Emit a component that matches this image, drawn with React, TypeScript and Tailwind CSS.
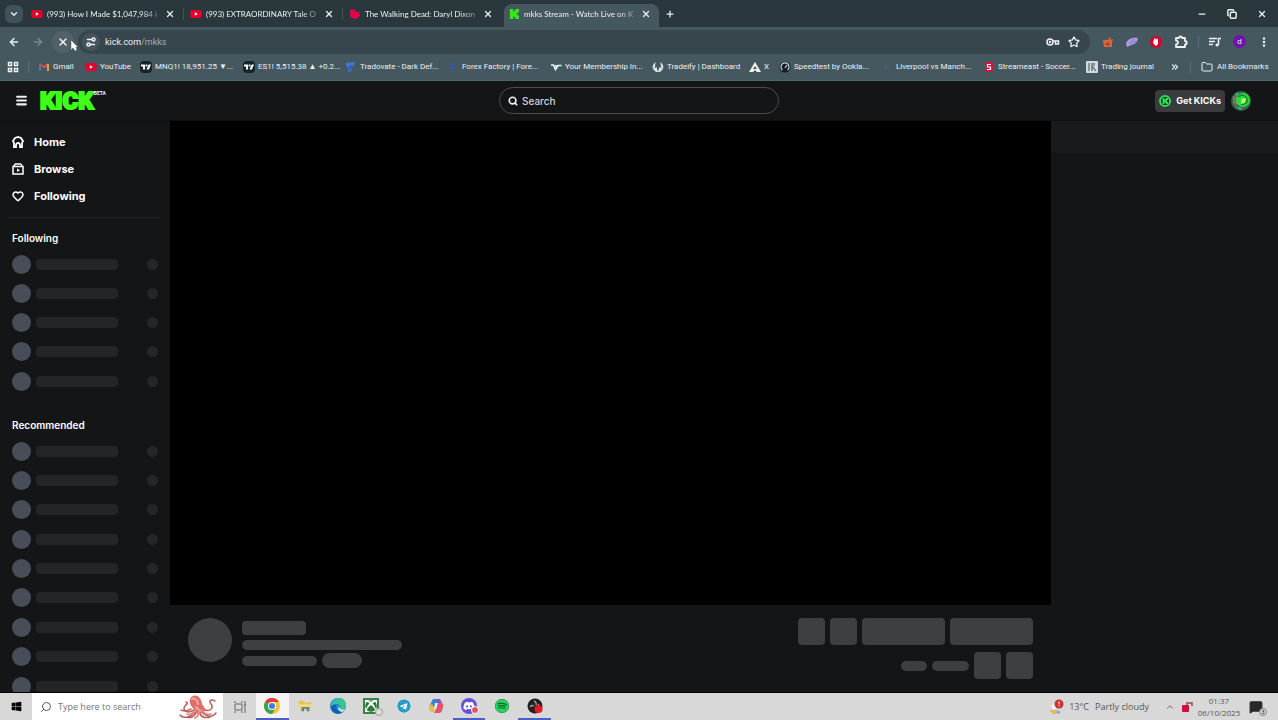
import React from "react";
import {
  ArrowLeft, ArrowRight, ChevronDown, ChevronUp, ChevronsRight, Copy, EllipsisVertical, Folder,
  Menu, Minus, Plus, Search, Settings2, Star, X, MessageSquareText, Heart,
} from "lucide-react";
import { FaDiscord, FaSpotify, FaTelegram, FaWindows, FaXbox, FaYoutube } from "react-icons/fa";
import { SiTradingview } from "react-icons/si";

const KickMark = ({ className = "" }: { className?: string }) => (
  <svg viewBox="0 0 12 12" className={className} fill="currentColor" aria-hidden="true">
    <path d="M1 0h4v3h1.500V1.500H8V0h4v4h-1.500v1.300H9v1.400h1.500V8H12v4H8v-1.500H6.500V9H5v3H1z" />
  </svg>
);

const YouTubeIcon = () => <FaYoutube className="size-3 shrink-0 rounded-sm bg-[radial-gradient(circle,white_30%,transparent_35%)] text-[#e6002d]" />;

const GmailIcon = () => (
  <svg viewBox="0 0 12 12" className="size-3 shrink-0" fill="none" strokeWidth="2">
    <path d="M2 10V3" stroke="#4876b8" />
    <path d="M2 3l4 3.500" stroke="#d34a45" />
    <path d="M6 6.500L10 3" stroke="#e0524b" />
    <path d="M10 3v7" stroke="#d6a34e" />
  </svg>
);

const AppsIcon = () => (
  <svg viewBox="0 0 12 12" className="size-3" fill="none" stroke="currentColor" strokeWidth="1.500">
    <path d="M1.500 1.500h3v3h-3zM7.500 1.500h3v3h-3zM1.500 7.500h3v3h-3zM7.500 7.500h3v3h-3z" />
  </svg>
);

const KeyIcon = () => (
  <svg viewBox="0 0 14 12" className="h-3 w-3.5" fill="none" stroke="currentColor" strokeWidth="1.500">
    <circle cx="4" cy="6" r="3" />
    <circle cx="4" cy="6" r=".5" />
    <path d="M7 5h5.500v3h-3V5.500" />
  </svg>
);

const PuzzleIcon = () => (
  <svg viewBox="0 0 14 14" className="size-3.5" fill="none" stroke="currentColor" strokeWidth="1.800">
    <path d="M2 3h3a1.500 1.500 0 0 1 3 0h3v3a1.700 1.700 0 0 1 0 3.400V12H2V9.500a2 2 0 0 0 0-4z" strokeLinejoin="round" />
  </svg>
);

const MediaIcon = () => (
  <svg viewBox="0 0 12 12" className="size-3" fill="none" stroke="currentColor" strokeWidth="1.500">
    <path d="M0 2.500h8M0 5.500h6M0 8.500h4M12 2.500H9.500V9" />
    <circle cx="8" cy="9" r="1.500" fill="currentColor" stroke="none" />
  </svg>
);

const TradingIcon = () => (
  <span className="flex size-3 shrink-0 items-center justify-center rounded-sm bg-[#17232b] text-white">
    <SiTradingview className="size-2.5" />
  </span>
);

const TradovateIcon = () => (
  <svg viewBox="0 0 12 12" className="size-3 shrink-0">
    <path d="M1 2l9-1-1 4-2 1-1 5-3-1V6L1 5z" fill="#4179cc" />
    <path d="M4 5l5-1-2 2-3 4z" fill="#2e5ca8" />
  </svg>
);

const ForexIcon = () => (
  <svg viewBox="0 0 12 12" className="size-3 shrink-0">
    <path d="M3 2h6v2H5v2h3v2H5v3H3z" fill="#3e5699" />
  </svg>
);

const WingIcon = () => (
  <svg viewBox="0 0 12 12" className="size-3 shrink-0" fill="none" stroke="#eef2f4" strokeWidth="1.600">
    <path d="M1 4h2.500l2 4.500L8 4.500h3.500M5 4.500l2 1" />
  </svg>
);

const LaurelIcon = () => (
  <svg viewBox="0 0 12 12" className="size-3 shrink-0" fill="#e1e7e9">
    <path d="M3.500 1C1 3 0 6 1 8l2-2zM8.500 1C11 3 12 6 11 8L9 6zM1 8l3 3h2L4.500 6zM11 8l-3 3H6l1.500-5z" />
  </svg>
);

const TriangleIcon = () => (
  <svg viewBox="0 0 12 12" className="size-3 shrink-0">
    <path d="M6 1l6 10H0z" fill="#eef2f4" />
    <path d="M6 5l2 3H4zM6 9l2 2H4z" fill="#46585f" />
  </svg>
);

const GaugeIcon = () => (
  <svg viewBox="0 0 12 12" className="size-3 shrink-0">
    <circle cx="6" cy="6" r="5.500" fill="#141c28" />
    <path d="M3.500 9A4 4 0 1 1 8.500 9M6 7l2-3" fill="none" stroke="#cfd8dd" strokeWidth="1.200" />
  </svg>
);

const BallIcon = () => (
  <svg viewBox="0 0 12 12" className="size-3 shrink-0">
    <path d="M3 4h5v4H3z" fill="#485d69" />
  </svg>
);

const StreamIcon = () => (
  <svg viewBox="0 0 12 12" className="size-3 shrink-0">
    <rect x="2" y="1" width="8" height="10" rx="2" fill="#d5123b" />
    <path d="M8 3.500H4.500V6H7.500v2.500H4" fill="none" stroke="white" strokeWidth="1.200" />
  </svg>
);

const JournalIcon = () => (
  <svg viewBox="0 0 12 12" className="size-3 shrink-0">
    <rect width="12" height="12" rx="1" fill="#d2dadd" />
    <path d="M3 2v8M6 2v8M6 5l4 5M8 2v3" fill="none" stroke="#52626a" strokeWidth="1.200" />
  </svg>
);

const WalkingIcon = () => (
  <svg viewBox="0 0 12 12" className="size-3 shrink-0">
    <path d="M1 2l4-1 1 2 4 1 1 4-4 3-5-1-1-4z" fill="#de0747" />
  </svg>
);

const tabs = [
  { title: "(993) How I Made $1,047,984 in", icon: <YouTubeIcon /> },
  { title: "(993) EXTRAORDINARY Tale Of", icon: <YouTubeIcon /> },
  { title: "The Walking Dead: Daryl Dixon", icon: <WalkingIcon /> },
  { title: "mkks Stream - Watch Live on K", icon: <KickMark className="mx-px size-2.5 shrink-0 text-[#35e816]" />, active: true },
];

const bookmarks = [
  { label: "Gmail", icon: <GmailIcon />, width: "w-[47px]" },
  { label: "YouTube", icon: <YouTubeIcon />, width: "w-[55px]" },
  { label: "MNQ1! 18,951.25 ▼...", icon: <TradingIcon />, width: "w-[103px]" },
  { label: "ES1! 5,515.38 ▲ +0.2...", icon: <TradingIcon />, width: "w-[102px]" },
  { label: "Tradovate - Dark Def...", icon: <TradovateIcon />, width: "w-[102px]" },
  { label: "Forex Factory | Fore...", icon: <ForexIcon />, width: "w-[103px]" },
  { label: "Your Membership In...", icon: <WingIcon />, width: "w-[102px]" },
  { label: "Tradeify | Dashboard", icon: <LaurelIcon />, width: "w-[97px]" },
  { label: "X", icon: <TriangleIcon />, width: "w-[30px]" },
  { label: "Speedtest by Ookla...", icon: <GaugeIcon />, width: "w-[102px]" },
  { label: "Liverpool vs Manch...", icon: <BallIcon />, width: "w-[102px]" },
  { label: "Streameast - Soccer...", icon: <StreamIcon />, width: "w-[103px]" },
  { label: "Trading journal", icon: <JournalIcon />, width: "w-[72px]" },
];

function TabStrip() {
  return (
    <div className="flex h-[27px] shrink-0 items-stretch bg-[#2a373d]">
      <div className="flex w-[27px] shrink-0 items-center justify-center">
        <button aria-label="Search tabs" className="flex size-[18px] items-center justify-center rounded-md bg-[#42525a]">
          <ChevronDown className="size-2.5" strokeWidth={3} />
        </button>
      </div>
      <div role="tablist" className="flex min-w-0">
        {tabs.map((tab, i) => (
          <div
            key={tab.title}
            className={
              tab.active
                ? "mt-1 flex w-[155px] items-center gap-1 rounded-t-lg bg-[#46585f] pr-2 pb-1 pl-1"
                : "flex w-[159px] items-center gap-1 pr-0.5 pl-1"
            }
          >
            {tab.icon}
            <button role="tab" aria-selected={!!tab.active} className="min-w-0 flex-1 text-left font-['Lato',sans-serif] whitespace-nowrap [mask-image:linear-gradient(to_right,black_85%,transparent_110%)]">
              {tab.title}
            </button>
            <button aria-label="Close tab" className="ml-1 shrink-0">
              <X className="size-2.5" strokeWidth={3} />
            </button>
            {!tab.active && <span className={i < 2 ? "ml-1 h-3 w-px bg-[#43515a]" : "ml-1 h-3 w-px"} />}
          </div>
        ))}
      </div>
      <button aria-label="New tab" className="px-1.5"><Plus className="size-2.5" strokeWidth={3} /></button>
      <div className="ml-auto flex items-center gap-5 pr-[11px]">
        <button aria-label="Minimize"><Minus className="size-2.5" strokeWidth={3} /></button>
        <button aria-label="Restore"><Copy className="size-2.5 -scale-x-100 -rotate-90" strokeWidth={3.500} /></button>
        <button aria-label="Close"><X className="size-2.5" strokeWidth={3} /></button>
      </div>
    </div>
  );
}

function Toolbar() {
  return (
    <div className="relative flex h-[29px] shrink-0 items-center bg-[#46585f] pr-2">
      <button aria-label="Back" className="flex w-7 justify-center"><ArrowLeft className="size-3" strokeWidth={3} /></button>
      <button aria-label="Forward" className="flex w-5 justify-center text-[#77878e]"><ArrowRight className="size-3" strokeWidth={3} /></button>
      <button aria-label="Stop loading" className="ml-1 flex size-[22px] items-center justify-center rounded-full bg-[#526168]"><X className="size-3" strokeWidth={3} /></button>
      <div className="ml-1 flex h-6 min-w-0 flex-1 items-center rounded-full bg-[#37464d] pr-2.5 pl-1">
        <button aria-label="Site information" className="flex size-[18px] items-center justify-center rounded-full bg-[#45545b]"><Settings2 className="size-3 -scale-y-100" strokeWidth={3} /></button>
        <div className="relative ml-[5px] min-w-0 flex-1 text-[9px]">
          <span aria-hidden="true">kick.com<span className="text-[#a0adb3]">/mkks</span></span>
          <input aria-label="Address" defaultValue="kick.com/mkks" className="absolute inset-0 w-full text-transparent outline-none" />
        </div>
        <button aria-label="Passwords"><KeyIcon /></button>
        <button aria-label="Bookmark page" className="ml-2"><Star className="size-3" strokeWidth={2.500} /></button>
      </div>
      <div className="flex items-center gap-3 pl-3">
        <button aria-label="Fox extension">
          <svg viewBox="0 0 12 12" className="size-3"><path d="M1 4h5l2-3 1 3 2-1-1 4v4H2z" fill="#db6334" /><path d="M3 8l4-2v4z" fill="#8c4430" /></svg>
        </button>
        <button aria-label="Planet extension">
          <svg viewBox="0 0 12 12" className="size-3"><path d="M0 8C1 3 6 1 12 2c-1 5-4 7-7 7l-4 2z" fill="#b19ae5" /><path d="M3 8l5-5M6 8l4-3" stroke="#7b69c1" /></svg>
        </button>
        <button aria-label="Blocker extension">
          <svg viewBox="0 0 12 12" className="size-3"><circle cx="6" cy="6" r="6" fill="#d80027" /><path d="M4 3l1-1 1 2 1-2 1 2v4L6 10 3 7z" fill="white" /></svg>
        </button>
        <button aria-label="Extensions"><PuzzleIcon /></button>
      </div>
      <span className="mx-2.5 h-3 w-px bg-[#5c6d74]" />
      <div className="flex items-center gap-3">
        <button aria-label="Media controls"><MediaIcon /></button>
        <button className="flex size-[13px] items-center justify-center rounded-full bg-[#7113ab]">d</button>
        <button aria-label="Browser menu"><EllipsisVertical className="size-3" strokeWidth={3} /></button>
      </div>
      <svg viewBox="0 0 10 14" className="absolute top-3 left-[70px] h-3.5 w-2.5" aria-hidden="true">
        <path d="M1 1v10l2-2 2 3 2-1-1-3h2z" fill="white" stroke="#46585f" strokeWidth=".5" />
      </svg>
    </div>
  );
}

function BookmarkBar() {
  return (
    <nav aria-label="Bookmarks" className="flex h-[25px] shrink-0 items-center overflow-hidden border-b border-[#53636a] bg-[#46585f] pb-0.5 pl-[7px] whitespace-nowrap">
      <button aria-label="Apps"><AppsIcon /></button>
      <span className="mx-[9px] h-3 w-px bg-[#5c6d74]" />
      {bookmarks.map((b) => (
        <a key={b.label} href="#" className={`${b.width} flex shrink-0 items-center gap-[3px]`}>
          {b.icon}
          <span>{b.label}</span>
        </a>
      ))}
      <button aria-label="More bookmarks" className="ml-3"><ChevronsRight className="size-2.5" strokeWidth={3} /></button>
      <span className="mx-2.5 h-3 w-px bg-[#5c6d74]" />
      <a href="#" className="flex items-center gap-1"><Folder className="size-3" />All Bookmarks</a>
    </nav>
  );
}

function SiteHeader() {
  return (
    <header className="grid h-10 shrink-0 grid-cols-[1fr_280px_1fr] items-center border-b border-[#0e0f10] bg-[#141517] font-['Inter',sans-serif]">
      <div className="flex items-center pl-[15px]">
        <button aria-label="Toggle menu"><Menu className="size-[13px]" strokeWidth={4} /></button>
        <a href="#" className="ml-3 flex items-start font-['Roboto',sans-serif]">
          <span className="text-2xl leading-6 font-black text-[#3fff19] [-webkit-text-stroke:2px_#3fff19]">KICK</span>
          <span className="text-[5px] leading-[8px] font-bold">BETA</span>
        </a>
      </div>
      <label className="flex h-[27px] items-center gap-1 rounded-full border border-[#4b4d4f] px-2">
        <Search className="size-2.5" strokeWidth={4} />
        <input aria-label="Search" placeholder="Search" className="min-w-0 flex-1 text-[10px] font-medium outline-none placeholder:text-[#d4d4d4]" />
      </label>
      <div className="flex items-center justify-end gap-1.5 pr-[27px]">
        <button className="flex h-[22px] items-center gap-1 rounded-sm bg-[#3a3b3d] px-1 text-[9px] font-bold text-white">
          <span className="mr-px flex size-3 items-center justify-center rounded-full border-2 border-[#28df5b] bg-[#102a18] text-[#28df5b]"><KickMark className="size-1.5" /></span>
          Get KICKs
        </button>
        <button aria-label="Profile">
          <svg viewBox="0 0 20 20" className="size-5">
            <circle cx="10" cy="10" r="10" fill="#39664b" />
            <path d="M2 5l5 1-1 9-4-3z" fill="#82705d" />
            <circle cx="12" cy="9" r="7" fill="#26df35" />
            <path d="M7 6c3-3 8-2 9 2s-3 6-6 5" fill="none" stroke="#17813f" strokeWidth="1.500" />
            <path d="M10 8l5-1-1 5-4 1z" fill="#a9fb70" />
            <path d="M4 3l4-2-2 5zM4 15l8 2-3 2z" fill="#45a898" />
          </svg>
        </button>
      </div>
    </header>
  );
}

function SkeletonRows({ count, height }: { count: number; height: string }) {
  return (
    <ul className={`${height} flex shrink-0 flex-col justify-between`}>
      {Array.from({ length: count }, (_, i) => (
        <li key={i} className="flex h-5 items-center">
          <span className="size-[19px] rounded-full bg-[#484d57]" />
          <span className="ml-[5px] h-[11px] w-[82px] rounded-sm bg-[#242527]" />
          <span className="ml-auto size-[11px] rounded-full bg-[#252628]" />
        </li>
      ))}
    </ul>
  );
}

function Sidebar() {
  return (
    <aside className="flex w-[170px] shrink-0 flex-col overflow-hidden bg-[#141517] pt-2 pr-3 pl-3 text-white">
      <nav aria-label="Main" className="flex h-20 shrink-0 flex-col text-[11px] font-bold">
        <a href="#" className="flex flex-1 items-center gap-2.5">
          <svg viewBox="0 0 12 12" className="size-3" fill="none" stroke="currentColor" strokeWidth="1.800"><path d="M1 5l2-3 3-1 3 1 2 3-1 2v4H8V9a2 2 0 0 0-4 0v2H2V7z" /></svg>
          Home
        </a>
        <a href="#" className="flex flex-1 items-center gap-2.5">
          <svg viewBox="0 0 12 12" className="size-3" fill="none" stroke="currentColor" strokeWidth="1.500"><path d="M3 1h6M1 3.500h10v7.500H1zM2 3l1-2M10 3L9 1" /><path d="M5 5.500v3.500l3-1.700z" fill="currentColor" stroke="none" /></svg>
          Browse
        </a>
        <a href="#" className="flex flex-1 items-center gap-2.5">
          <Heart className="size-3" strokeWidth={3} />
          Following
        </a>
      </nav>
      <hr className="mt-2 -mr-0.5 -ml-1 border-[#252628]" />
      <h2 className="mt-[11px] mb-[7px] shrink-0 text-[10px] leading-[18px] font-semibold">Following</h2>
      <SkeletonRows count={5} height="h-[137px]" />
      <h2 className="mt-[25px] mb-[7px] shrink-0 text-[10px] leading-[18px] font-semibold">Recommended</h2>
      <SkeletonRows count={9} height="h-[255px]" />
    </aside>
  );
}

function StreamInfo() {
  return (
    <section aria-label="Loading channel" className="flex justify-between px-[18px] pt-[13px]">
      <div className="flex gap-2.5">
        <span className="size-11 rounded-full bg-[#3e3f41]" />
        <div className="flex flex-col pt-[3px]">
          <span className="h-3.5 w-16 rounded-sm bg-[#3e3f41]" />
          <span className="mt-[5px] h-2.5 w-40 rounded-full bg-[#3e3f41]" />
          <div className="mt-[3px] flex items-center gap-[5px]">
            <span className="h-2.5 w-[75px] rounded-full bg-[#3e3f41]" />
            <span className="h-[15px] w-10 rounded-full bg-[#3e3f41]" />
          </div>
        </div>
      </div>
      <div className="flex flex-col items-end gap-[7px]">
        <div className="flex gap-[5px]">
          <span className="size-[27px] rounded bg-[#3e3f41]" />
          <span className="size-[27px] rounded bg-[#3e3f41]" />
          <span className="h-[27px] w-[83px] rounded-sm bg-[#3e3f41]" />
          <span className="h-[27px] w-[83px] rounded-sm bg-[#3e3f41]" />
        </div>
        <div className="flex items-center gap-[5px]">
          <span className="h-2.5 w-[26px] rounded-full bg-[#3e3f41]" />
          <span className="h-2.5 w-[37px] rounded-full bg-[#3e3f41]" />
          <span className="size-[27px] rounded bg-[#3e3f41]" />
          <span className="size-[27px] rounded bg-[#3e3f41]" />
        </div>
      </div>
    </section>
  );
}

const Chrome = () => (
  <svg viewBox="0 0 16 16" className="size-4">
    <circle cx="8" cy="8" r="8" fill="#f4c430" />
    <path d="M8 8L1.070 4A8 8 0 0 1 14.930 4H8z" fill="#df3f34" />
    <path d="M8 8l-6.930-4A8 8 0 0 0 8 16l3.500-6z" fill="#33a852" />
    <circle cx="8" cy="8" r="4" fill="white" />
    <circle cx="8" cy="8" r="3" fill="#3b7de8" />
  </svg>
);

const Explorer = () => (
  <svg viewBox="0 0 16 16" className="size-3.5">
    <path d="M1 2h5l1 2h8v9H1z" fill="#eac34e" />
    <path d="M1 6h14v7H1z" fill="#f7d979" />
    <path d="M4 9h9v5h-3v-3H7v3H4z" fill="#5185af" />
  </svg>
);

const Edge = () => (
  <svg viewBox="0 0 16 16" className="size-4">
    <circle cx="8" cy="8" r="8" fill="#1687cf" />
    <path d="M1 6a7.500 7.500 0 0 1 15 2c0 3-3 4-6 3 1-2 0-5-3-5-2 0-4 1-6 3z" fill="#38c48d" />
    <path d="M1 6a7.500 7.500 0 0 1 12-3C8 2 4 4 1 9z" fill="#31b4d5" />
    <path d="M6 7c-1 4 2 7 7 6-4 5-12 2-12-4 1-2 3-3 5-2z" fill="#1261ad" />
    <path d="M9 8c0 3 3 4 6 3l-2 3c-4 0-6-3-4-6z" fill="#d9dbda" />
  </svg>
);

const Copilot = () => (
  <svg viewBox="0 0 16 16" className="size-4">
    <path d="M5 1h4q2 0 2 3l-1 2H8L6 12H3q-2 0-2-3z" fill="#3285d9" />
    <path d="M1 8l3-2 3 5-1 3H4q-2 0-3-4z" fill="#e9ba45" />
    <path d="M9 1h2q2 0 3 5l-1 2h-4z" fill="#7855cb" />
    <path d="M10 5h3q3 0 2 4l-1 4q-1 2-3 2H6l2-4z" fill="#e6516c" />
    <path d="M7 5h3l-2 6H6z" fill="#f4eef3" />
  </svg>
);

const Recorder = () => (
  <svg viewBox="0 0 16 16" className="size-4">
    <circle cx="8" cy="8" r="7.500" fill="#211f20" />
    <path d="M7 3a3 3 0 0 1 2 4M3 9a3 3 0 0 1 4-1M11 6a3 3 0 0 1 1 3" fill="none" stroke="#aaa" strokeWidth="1.300" />
    <circle cx="11.500" cy="11" r="4" fill="#e1192a" />
  </svg>
);

const Octopus = () => (
  <svg viewBox="0 0 38 24" className="h-6 w-[38px] shrink-0" fill="none" strokeLinecap="round" aria-hidden="true">
    <g stroke="#b5605c" strokeWidth="1.500">
      <path d="M15 15C7 20 3 14 6 11s3-3 1-4M16 17C10 24 3 23 1 20M17 18c-2 5-7 5-9 4M21 18c1 5 6 5 10 4M22 16c5 6 11 7 15 2M23 14c8 4 12-1 9-5s1-5 4-3M12 14C8 16 5 17 2 15" />
    </g>
    <path d="M15 14C10 10 9 3 14 1s9 4 9 8l4 6-8 5z" fill="#e26e68" />
    <path d="M13 4c3-2 6 2 6 5M17 12l4 4" stroke="#f3aaa1" strokeWidth="2" />
    <path d="M16 15c-3 5-6 5-8 4M20 16c0 4-2 6-4 7M23 15c3 5 6 5 9 4" stroke="#e58a80" strokeWidth="1.800" />
  </svg>
);

const apps = [
  { name: "Chrome", icon: <Chrome />, style: "border-[#4a5fc1] bg-[#f4f4f4]" },
  { name: "File Explorer", icon: <Explorer />, style: "border-transparent" },
  { name: "Edge", icon: <Edge />, style: "border-transparent" },
  {
    name: "Xbox",
    icon: (
      <span className="relative flex size-4 items-center justify-center border-2 border-[#398344] bg-white text-[#317a3b]">
        <FaXbox className="size-3" />
        <span className="absolute -right-1.5 -bottom-1 size-2 rounded-full border border-[#9aa29b] bg-[#dedede]" />
      </span>
    ),
    style: "border-transparent",
  },
  { name: "Telegram", icon: <FaTelegram className="size-3.5 rounded-full bg-white text-[#289bc8]" />, style: "border-transparent" },
  { name: "Copilot", icon: <Copilot />, style: "border-transparent" },
  {
    name: "Discord",
    icon: (
      <span className="relative flex size-4 items-center justify-center rounded-full bg-[#6750d5] text-white">
        <FaDiscord className="size-3" />
        <span className="absolute -right-0.5 bottom-0 size-2 rounded-full border border-white bg-[#d95362]" />
      </span>
    ),
    style: "border-[#4a5fc1]",
  },
  { name: "Spotify", icon: <FaSpotify className="size-3.5 rounded-full bg-[#185d2e] text-[#25d45e]" />, style: "border-transparent" },
  { name: "Recorder", icon: <Recorder />, style: "border-[#4a5fc1]" },
];

function Taskbar() {
  return (
    <footer className="flex h-[27px] shrink-0 items-stretch bg-[#d8d8d8] text-[#55575a]">
      <button aria-label="Start" className="flex w-8 items-center justify-center text-black"><FaWindows className="size-[11px]" /></button>
      <label className="flex w-[191px] items-center bg-white pr-1.5 pl-2">
        <Search className="size-3 -scale-x-100" />
        <input aria-label="Type here to search" placeholder="Type here to search" className="ml-1.5 min-w-0 flex-1 font-['Open_Sans',sans-serif] text-[9px] outline-none placeholder:text-[#747678]" />
        <Octopus />
      </label>
      <button aria-label="Task view" className="flex w-[33px] items-center justify-center">
        <svg viewBox="0 0 12 12" className="size-3" fill="none" stroke="#626466"><path d="M1 3h7v6H1zM1 0v2M8 0v2M1 10v2M8 10v2M11 0v12M10 4h2" /></svg>
      </button>
      <div className="flex w-[295px]">
        {apps.map((app) => (
          <button key={app.name} aria-label={app.name} className={`${app.style} flex flex-1 items-center justify-center border-b-2`}>
            {app.icon}
          </button>
        ))}
      </div>
      <div className="ml-auto flex items-center pr-[15px]">
        <button className="flex items-center gap-1.5 font-['Open_Sans',sans-serif] text-[9px]">
          <svg viewBox="0 0 16 16" className="-mr-0.5 size-4">
            <path d="M2 7l5-4 3 4-5 4z" fill="#f7f8ff" />
            <path d="M1 12h6M3 14h6" stroke="#e7b75d" strokeWidth="2" />
            <path d="M7 11l5 2-3 2z" fill="#7aa1ef" />
            <circle cx="10" cy="5" r="4.500" fill="#c83531" />
            <path d="M10 2.500v3M10 6.500v1" stroke="white" />
          </svg>
          <span>13°C</span>
          <span>Partly cloudy</span>
        </button>
        <button aria-label="Show hidden icons" className="ml-4"><ChevronUp className="size-2.5" /></button>
        <svg viewBox="0 0 12 12" className="ml-1.5 size-3" aria-hidden="true">
          <rect x="1" y="4" width="7" height="7" rx="1" fill="#d50b38" />
          <path d="M6 4V2h5v3" fill="none" stroke="#8e4e57" strokeWidth="1.500" />
        </svg>
        <div className="ml-1.5 flex w-10 flex-col items-center font-['Open_Sans',sans-serif] text-[8px] leading-3">
          <span>01:37</span>
          <span>06/10/2025</span>
        </div>
        <button aria-label="Notifications" className="relative ml-2.5 text-[#28292b]">
          <MessageSquareText className="size-3.5" fill="#28292b" stroke="#28292b" />
          <span className="absolute -right-1 -bottom-0.5 flex size-2 items-center justify-center rounded-full border border-[#888] bg-[#d8d8d8] text-[6px] leading-none">3</span>
        </button>
      </div>
    </footer>
  );
}

export default function App() {
  return (
    <div className="flex h-screen flex-col overflow-hidden bg-[#141517] font-['Roboto',sans-serif] text-[8px] leading-3 text-[#edf1f2]">
      <TabStrip />
      <Toolbar />
      <BookmarkBar />
      <SiteHeader />
      <div className="flex min-h-0 flex-1 border-b border-black font-['Inter',sans-serif]">
        <Sidebar />
        <main className="min-w-0 flex-1">
          <div aria-label="Video player" className="aspect-[881/484] bg-black" />
          <StreamInfo />
        </main>
        <aside aria-label="Chat" className="w-[227px] shrink-0">
          <div className="h-8 bg-[#191a1c]" />
        </aside>
      </div>
      <Taskbar />
    </div>
  );
}
